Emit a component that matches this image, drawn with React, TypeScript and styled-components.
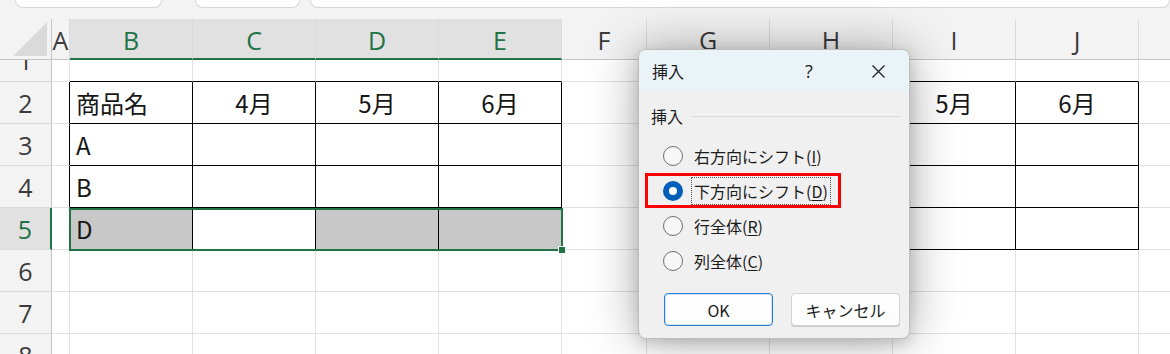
import React from "react";
import styled, { createGlobalStyle, css } from "styled-components";

const GlobalStyle = createGlobalStyle`
  body {
    margin: 0;
    background: #ffffff;
    overflow: hidden;
  }
`;

const GREEN = "#217346";
const GRID = "#e1e1e1";
const HEAD_BG = "#f3f3f3";
const HEAD_SEL = "#e1e1e1";

const letters = ["A", "B", "C", "D", "E", "F", "G", "H", "I", "J", "K"];
const widths = [18, 123, 123, 123, 123, 85, 123, 123, 123, 123, 123];
const rows = [1, 2, 3, 4, 5, 6, 7, 8];

const values: Record<string, string> = {
  B2: "商品名",
  C2: "4月",
  D2: "5月",
  E2: "6月",
  B3: "A",
  B4: "B",
  B5: "D",
  G2: "商品名",
  H2: "4月",
  I2: "5月",
  J2: "6月",
  G3: "A",
  G4: "B",
  G5: "D",
};
const centered = ["C2", "D2", "E2", "H2", "I2", "J2"];
const filled = ["B5", "D5", "E5"];

// letter index ranges of the two bordered tables
const tables = [
  { c1: 1, c2: 4, r1: 2, r2: 5 },
  { c1: 6, c2: 9, r1: 2, r2: 5 },
];

const inTable = (r: number, c: number) =>
  tables.some((t) => r >= t.r1 && r <= t.r2 && c >= t.c1 && c <= t.c2);

const Page = styled.div`
  position: relative;
  width: 1170px;
  height: 354px;
  overflow: hidden;
  background: #fff;
`;

const TopStrip = styled.div`
  display: flex;
  height: 19px;
  background: ${HEAD_BG};
`;

const StripBox = styled.div<{ $width?: number; $gap: number }>`
  box-sizing: border-box;
  height: 8px;
  margin-left: ${(p) => p.$gap}px;
  ${(p) =>
    p.$width
      ? css`
          width: ${p.$width}px;
        `
      : css`
          flex: 1;
        `}
  background: #fff;
  border: 1px solid #d6d6d6;
  border-top: none;
  border-radius: 0 0 8px 8px;
`;

const Sheet = styled.div`
  display: grid;
  grid-template-columns: 52px ${widths.map((w) => `${w}px`).join(" ")};
  grid-template-rows: 41px 22px repeat(7, 42px);
`;

const Corner = styled.div`
  grid-row: 1;
  grid-column: 1;
  box-sizing: border-box;
  display: flex;
  justify-content: flex-end;
  align-items: flex-end;
  padding: 0 4px 3px 0;
  background: ${HEAD_BG};
  border-right: 1px solid #c6c6c6;
  border-bottom: 1px solid #c6c6c6;
`;

const headerText = css`
  font-family: "Open Sans", "Liberation Sans", sans-serif;
  font-size: 25px;
  font-weight: 400;
`;

const ColHeader = styled.div<{ $c: number; $selected: boolean }>`
  grid-row: 1;
  grid-column: ${(p) => p.$c};
  box-sizing: border-box;
  display: flex;
  align-items: center;
  justify-content: center;
  ${headerText};
  color: ${(p) => (p.$selected ? GREEN : "#3b3b3b")};
  background: ${(p) => (p.$selected ? HEAD_SEL : HEAD_BG)};
  border-right: 1px solid #dadada;
  border-bottom: ${(p) => (p.$selected ? `2px solid ${GREEN}` : "1px solid #c6c6c6")};
  padding-top: 2px;
`;

const RowHeader = styled.div<{ $r: number; $selected: boolean; $clip: boolean }>`
  grid-row: ${(p) => p.$r};
  grid-column: 1;
  box-sizing: border-box;
  display: flex;
  justify-content: center;
  align-items: ${(p) => (p.$clip ? "flex-end" : "center")};
  overflow: hidden;
  ${headerText};
  color: ${(p) => (p.$selected ? GREEN : "#3b3b3b")};
  background: ${(p) => (p.$selected ? HEAD_SEL : HEAD_BG)};
  border-right: ${(p) => (p.$selected ? `2px solid ${GREEN}` : "1px solid #c6c6c6")};
  border-bottom: 1px solid #dcdcdc;

  span {
    display: block;
    height: 42px;
    line-height: 42px;
    flex-shrink: 0;
  }
`;

const Cell = styled.div<{
  $r: number;
  $c: number;
  $right: string;
  $bottom: string;
  $fill: string;
  $center: boolean;
}>`
  grid-row: ${(p) => p.$r};
  grid-column: ${(p) => p.$c};
  box-sizing: border-box;
  display: flex;
  align-items: center;
  justify-content: ${(p) => (p.$center ? "center" : "flex-start")};
  padding: 0 6px;
  overflow: hidden;
  white-space: nowrap;
  font-family: "Noto Sans CJK JP", sans-serif;
  font-size: 24px;
  color: #161616;
  background: ${(p) => p.$fill};
  border-right: 1px solid ${(p) => p.$right};
  border-bottom: 1px solid ${(p) => p.$bottom};
`;

const Selection = styled.div`
  grid-row: 6;
  grid-column: 3 / 7;
  position: relative;
  z-index: 1;
  margin: 0 -1px -1px -1px;
  border: 2px solid ${GREEN};
  pointer-events: none;
`;

const FillHandle = styled.div`
  position: absolute;
  right: -5px;
  bottom: -5px;
  width: 6px;
  height: 6px;
  background: ${GREEN};
  border: 1px solid #fff;
`;

const Dialog = styled.div`
  position: absolute;
  left: 638px;
  top: 49px;
  z-index: 5;
  box-sizing: border-box;
  width: 272px;
  height: 290px;
  display: flex;
  flex-direction: column;
  background: #f0f0f0;
  border: 1px solid #bdbdbd;
  border-radius: 8px;
  box-shadow: 0 0 50px rgba(0, 0, 0, 0.34), 0 4px 14px rgba(0, 0, 0, 0.14);
  font-family: "Noto Sans CJK JP", sans-serif;
  color: #1b1b1b;
  overflow: hidden;
`;

const TitleBar = styled.div`
  display: flex;
  align-items: center;
  height: 42px;
  padding: 0 8px 0 13px;
  background: #eaf4f8;
  flex-shrink: 0;
`;

const Title = styled.div`
  flex: 1;
  font-size: 16px;
`;

const TitleButton = styled.div<{ $spaced?: boolean }>`
  width: 46px;
  margin-right: ${(p) => (p.$spaced ? 23 : 0)}px;
  display: flex;
  justify-content: center;
  align-items: center;
  font-family: "Open Sans", sans-serif;
  font-size: 18px;
  color: #222;
`;

const DialogBody = styled.div`
  padding-top: 12px;
  display: flex;
  flex-direction: column;
`;

const GroupHeader = styled.div`
  display: flex;
  align-items: center;
  gap: 9px;
  height: 24px;
  padding: 0 9px 0 12px;
  font-size: 16px;
`;

const Rule = styled.div`
  flex: 1;
  height: 1px;
  background: #d9d9d9;
`;

const RadioList = styled.div`
  display: flex;
  flex-direction: column;
  margin-top: 10px;
`;

const RadioRow = styled.div<{ $highlight: boolean }>`
  box-sizing: border-box;
  display: flex;
  align-items: center;
  width: fit-content;
  height: 35px;
  margin-left: 6px;
  padding: 0 7px 0 15px;
  border: 3px solid ${(p) => (p.$highlight ? "#ff0000" : "transparent")};
`;

const RadioCircle = styled.div<{ $checked: boolean }>`
  box-sizing: border-box;
  width: 20px;
  height: 20px;
  border-radius: 50%;
  display: flex;
  align-items: center;
  justify-content: center;
  flex-shrink: 0;
  ${(p) =>
    p.$checked
      ? css`
          background: #005fb8;
          &::after {
            content: "";
            width: 8px;
            height: 8px;
            border-radius: 50%;
            background: #fff;
          }
        `
      : css`
          background: #f7f7f7;
          border: 1px solid #6e6e6e;
        `}
`;

const RadioLabel = styled.div<{ $focused: boolean }>`
  box-sizing: border-box;
  display: flex;
  align-items: center;
  height: 28px;
  margin-left: 8px;
  padding: 0 2px;
  font-size: 16px;
  white-space: nowrap;
  border: 1px dotted ${(p) => (p.$focused ? "#555" : "transparent")};

  u {
    text-underline-offset: 2px;
  }
`;

const ButtonRow = styled.div`
  display: flex;
  gap: 18px;
  margin-top: 15px;
  padding-left: 25px;
`;

const DialogButton = styled.div<{ $primary?: boolean }>`
  box-sizing: border-box;
  width: 109px;
  height: 33px;
  display: flex;
  align-items: center;
  justify-content: center;
  font-size: 16px;
  background: #fdfdfd;
  border-radius: 4px;
  border: 1px solid ${(p) => (p.$primary ? "#2b7fd0" : "#d3d3d3")};
  box-shadow: ${(p) => (p.$primary ? "inset 0 0 0 1px #cfe2f5" : "0 1px 0 #c9c9c9")};
`;

const options = [
  { text: "右方向にシフト", key: "I", checked: false },
  { text: "下方向にシフト", key: "D", checked: true },
  { text: "行全体", key: "R", checked: false },
  { text: "列全体", key: "C", checked: false },
];

const CloseIcon = () => (
  <svg width="15" height="15" viewBox="0 0 15 15">
    <path d="M1.5 1.5 L13.5 13.5 M13.5 1.5 L1.5 13.5" stroke="#222" strokeWidth="1.3" fill="none" />
  </svg>
);

const App: React.FC = () => {
  return (
    <>
      <GlobalStyle />
      <Page>
        <TopStrip>
          <StripBox $gap={15} $width={147} />
          <StripBox $gap={33} $width={105} />
          <StripBox $gap={10} />
        </TopStrip>
        <Sheet>
          <Corner>
            <svg width="34" height="34" viewBox="0 0 34 34">
              <polygon points="34,0 34,34 0,34" fill="#dadada" />
            </svg>
          </Corner>
          {letters.map((l, i) => (
            <ColHeader key={l} $c={i + 2} $selected={i >= 1 && i <= 4}>
              {l}
            </ColHeader>
          ))}
          {rows.map((r) => (
            <React.Fragment key={r}>
              <RowHeader $r={r + 1} $selected={r === 5} $clip={r === 1}>
                <span>{r}</span>
              </RowHeader>
              {letters.map((l, c) => {
                const id = `${l}${r}`;
                const own = inTable(r, c);
                return (
                  <Cell
                    key={id}
                    $r={r + 1}
                    $c={c + 2}
                    $right={own || inTable(r, c + 1) ? "#000" : GRID}
                    $bottom={own || inTable(r + 1, c) ? "#000" : GRID}
                    $fill={filled.includes(id) ? "#c8c8c8" : "#fff"}
                    $center={centered.includes(id)}
                  >
                    {values[id] ?? ""}
                  </Cell>
                );
              })}
            </React.Fragment>
          ))}
          <Selection>
            <FillHandle />
          </Selection>
        </Sheet>

        <Dialog>
          <TitleBar>
            <Title>挿入</Title>
            <TitleButton $spaced>?</TitleButton>
            <TitleButton>
              <CloseIcon />
            </TitleButton>
          </TitleBar>
          <DialogBody>
            <GroupHeader>
              <span>挿入</span>
              <Rule />
            </GroupHeader>
            <RadioList>
              {options.map((o) => (
                <RadioRow key={o.key} $highlight={o.checked}>
                  <RadioCircle $checked={o.checked} />
                  <RadioLabel $focused={o.checked}>
                    {o.text}(<u>{o.key}</u>)
                  </RadioLabel>
                </RadioRow>
              ))}
            </RadioList>
            <ButtonRow>
              <DialogButton $primary>OK</DialogButton>
              <DialogButton>キャンセル</DialogButton>
            </ButtonRow>
          </DialogBody>
        </Dialog>
      </Page>
    </>
  );
};

export default App;
